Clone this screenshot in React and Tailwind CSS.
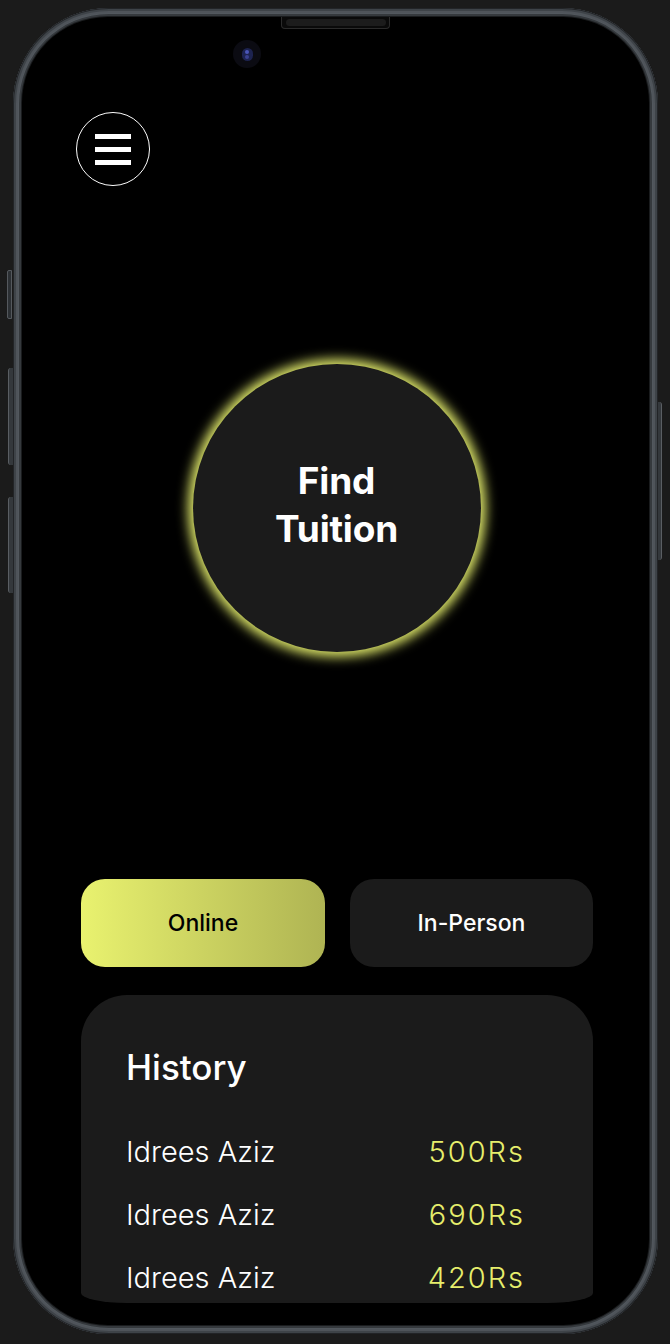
const history = [
  { name: "Idrees Aziz", amount: "500Rs" },
  { name: "Idrees Aziz", amount: "690Rs" },
  { name: "Idrees Aziz", amount: "420Rs" },
];

export default function App() {
  return (
    <div className="relative w-[670px] h-[1344px] bg-[#1b1b1b] overflow-hidden font-['Inter',sans-serif]">
      {/* side buttons */}
      <div className="absolute left-[7px] top-[270px] w-[5px] h-[49px] rounded-l-[2px] bg-[#2c3034] border border-[#55595e]" />
      <div className="absolute left-[8px] top-[368px] w-[5px] h-[97px] rounded-l-[3px] bg-[#34383c] border-l border-[#5a5e63]" />
      <div className="absolute left-[8px] top-[497px] w-[5px] h-[96px] rounded-l-[3px] bg-[#34383c] border-l border-[#5a5e63]" />
      <div className="absolute left-[657px] top-[402px] w-[5px] h-[158px] rounded-r-[3px] bg-[#34383c] border-r border-[#5a5e63]" />

      {/* phone frame */}
      <div className="absolute left-[13px] top-[8px] w-[645px] h-[1326px] rounded-[96px] bg-[#35393d] p-[9px] shadow-[inset_0_0_0_1px_#222427,inset_0_0_0_3px_#3e4348,inset_0_0_0_5px_#30343818,inset_0_0_0_6px_#52585e]">
        <div className="relative w-full h-full rounded-[86px] bg-black overflow-hidden shadow-[0_0_0_1px_#1a1c1e]">
          {/* speaker */}
          <div className="absolute left-[259px] top-0 w-[109px] h-[12px] rounded-b-[4px] border border-t-0 border-[#2b2b2b] bg-[#0a0a0a] flex items-center justify-center">
            <div className="w-[100px] h-[7px] rounded-full bg-[#1c1c1c]" />
          </div>
          {/* camera */}
          <div className="absolute left-[211px] top-[23px] w-[28px] h-[28px] rounded-full bg-[#0b0b12] flex items-center justify-center">
            <div className="w-[11px] h-[13px] rounded-full bg-[#1d2350] flex flex-col items-center justify-center gap-[1px]">
              <div className="w-[4px] h-[4px] rounded-full bg-[#4b56b8]" />
              <div className="w-[4px] h-[4px] rounded-full bg-[#3a4090]" />
            </div>
          </div>

          <div className="flex flex-col h-full">
            {/* menu button */}
            <button className="ml-[54px] mt-[95px] w-[74px] h-[74px] rounded-full border-[1.5px] border-white flex flex-col items-center justify-center gap-[8px]">
              <span className="block w-[36px] h-[5px] bg-white" />
              <span className="block w-[36px] h-[5px] bg-white" />
              <span className="block w-[36px] h-[5px] bg-white" />
            </button>

            {/* find tuition */}
            <div className="flex justify-center mt-[178px] pl-[2px]">
              <button className="w-[288px] h-[288px] rounded-full bg-[#1b1b1b] shadow-[0_0_12px_5px_#dfe86a] flex items-center justify-center">
                <span className="text-white font-bold text-[37px] leading-[48px] text-center tracking-[-0.2px] -mt-[6px]">
                  Find
                  <br />
                  Tuition
                </span>
              </button>
            </div>

            {/* mode toggle */}
            <div className="ml-[59px] mt-[227px] w-[512px] flex gap-[25px]">
              <button className="w-[244px] h-[88px] rounded-[24px] bg-gradient-to-r from-[#e9f26f] to-[#afb453] text-black text-[23px] font-medium">
                Online
              </button>
              <button className="w-[243px] h-[88px] rounded-[24px] bg-[#1b1b1b] text-white text-[23px] font-medium">
                In-Person
              </button>
            </div>

            {/* history */}
            <div className="ml-[59px] mt-[28px] w-[512px] h-[308px] bg-[#1b1b1b] rounded-t-[46px] rounded-bl-[46px_10px] rounded-br-[46px_10px] pl-[45px] pr-[70px] pt-[50px]">
              <h2 className="text-white text-[35px] font-medium leading-[44px]">History</h2>
              <div className="mt-[43px] flex flex-col gap-[23px]">
                {history.map((h, i) => (
                  <div key={i} className="flex items-center justify-between leading-[40px]">
                    <span className="text-white text-[29px] font-light">{h.name}</span>
                    <span className="text-[#e6ee6c] text-[29px] font-light tracking-[2px] -mr-[2px]">{h.amount}</span>
                  </div>
                ))}
              </div>
            </div>
          </div>
        </div>
      </div>
    </div>
  );
}
